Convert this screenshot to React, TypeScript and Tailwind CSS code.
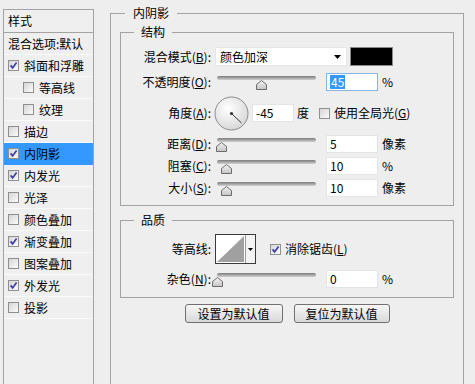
import React from "react";

type Item = { name: string; on?: boolean; sub?: boolean; sel?: boolean };

const items: Item[] = [
  { name: "斜面和浮雕", on: true },
  { name: "等高线", sub: true },
  { name: "纹理", sub: true },
  { name: "描边" },
  { name: "内阴影", on: true, sel: true },
  { name: "内发光", on: true },
  { name: "光泽" },
  { name: "颜色叠加" },
  { name: "渐变叠加", on: true },
  { name: "图案叠加" },
  { name: "外发光", on: true },
  { name: "投影" },
];

const Check = ({ on }: { on?: boolean }) => (
  <span className="w-[11px] h-[11px] shrink-0 border border-[#8e8f8f] bg-gradient-to-br from-[#d6d6d6] to-[#fbfbfb] flex items-center justify-center">
    {on && (
      <svg width="9" height="9" viewBox="0 0 9 9">
        <path d="M1.6 4.4L3.6 6.9L7.6 1.6" stroke="#3b3ba3" strokeWidth="1.7" fill="none" />
      </svg>
    )}
  </span>
);

const Label = ({ text, k }: { text: string; k?: string }) => (
  <div className="w-[90px] shrink-0 text-right whitespace-nowrap">
    {text}
    {k && (
      <>
        (<span className="underline">{k}</span>):
      </>
    )}
  </div>
);

const Slider = ({ value }: { value: number }) => (
  <div className="relative w-[104px] h-[18px] shrink-0">
    <div className="ml-[2px] mt-[5px] w-[99px] h-[4px] rounded-full bg-gradient-to-b from-[#7c7c7c] to-[#d2d2d2]" />
    <svg
      className="absolute top-[4px]"
      style={{ left: 2 + value * 99 - 5.5 }}
      width="11"
      height="10"
      viewBox="0 0 11 10"
    >
      <defs>
        <linearGradient id="tg" x1="0" y1="0" x2="0" y2="1">
          <stop offset="0" stopColor="#f4f4f4" />
          <stop offset="1" stopColor="#c4c4c4" />
        </linearGradient>
      </defs>
      <path d="M5.5 0.5L10.5 4.5V9.5H0.5V4.5Z" fill="url(#tg)" stroke="#6b6b6b" />
    </svg>
  </div>
);

const Field = ({ v, w = "w-[52px]", focus }: { v: string; w?: string; focus?: boolean }) => (
  <div
    className={`h-[18px] ${w} shrink-0 bg-white border ${
      focus ? "border-[#86b5e2]" : "border-[#e4e4e4]"
    } flex items-center pl-[3px]`}
  >
    {focus ? <span className="bg-[#3399ff] text-white px-[1px] leading-[14px]">{v}</span> : v}
  </div>
);

const Box = ({ title, children, className }: { title: string; children: React.ReactNode; className?: string }) => (
  <div className={`border border-[#a3a3a3] ${className ?? ""}`}>
    <div className="-mt-[8px] ml-[13px] px-[7px] w-fit bg-[#eeeeee] leading-[14px]">{title}</div>
    {children}
  </div>
);

export default function App() {
  return (
    <div className="w-[475px] h-[384px] overflow-hidden bg-[#eeeeee] flex text-[12px] leading-[14px] text-black font-['Noto_Sans_CJK_SC','Noto_Sans',sans-serif]">
      {/* style list */}
      <div className="ml-[3px] mt-[9px] w-[91px] self-stretch border border-b-0 border-[#a3a3a3] bg-[#efefef]">
        <div className="h-[23px] border-b border-[#a3a3a3] pl-[4px] flex items-center">样式</div>
        <div className="h-[22px] border-b border-[#fbfbfb] pl-[4px] flex items-center whitespace-nowrap">混合选项:默认</div>
        {items.map((it) => (
          <div
            key={it.name}
            className={`h-[22px] border-b flex items-center gap-[5px] ${it.sub ? "pl-[19px]" : "pl-[4px]"} ${
              it.sel ? "bg-[#3399ff] border-[#3399ff]" : "border-[#fbfbfb]"
            }`}
          >
            <Check on={it.on} />
            <span>{it.name}</span>
          </div>
        ))}
      </div>

      {/* inner shadow panel */}
      <div className="ml-[16px] mt-[13px] w-[354px] self-stretch border border-b-0 border-[#a3a3a3]">
        <div className="-mt-[8px] ml-[14px] px-[8px] w-fit bg-[#eeeeee] leading-[14px]">内阴影</div>

        <Box title="结构" className="mt-[12px] ml-[9px] mr-[9px] pb-[8px]">
          <div className="mt-[8px] h-[19px] flex items-center">
            <Label text="混合模式" k="B" />
            <div className="ml-[4px] w-[132px] h-[19px] bg-white border border-[#e6e6e6] flex items-center justify-between pl-[4px] pr-[5px]">
              <span>颜色加深</span>
              <svg width="7" height="4" viewBox="0 0 7 4">
                <path d="M0 0H7L3.5 4Z" fill="#000" />
              </svg>
            </div>
            <div className="ml-[3px] w-[43px] h-[19px] bg-black border border-[#8a8a8a]" />
          </div>

          <div className="mt-[7px] h-[18px] flex items-center">
            <Label text="不透明度" k="O" />
            <div className="ml-[4px]"><Slider value={0.45} /></div>
            <div className="ml-[7px]"><Field v="45" focus /></div>
            <span className="ml-[4px]">%</span>
          </div>

          <div className="mt-[5px] h-[34px] flex items-center">
            <Label text="角度" k="A" />
            <svg className="ml-[3px] shrink-0" width="35" height="35" viewBox="0 0 35 35">
              <defs>
                <radialGradient id="dg" cx="40%" cy="35%" r="70%">
                  <stop offset="0" stopColor="#ffffff" />
                  <stop offset="1" stopColor="#d6d6d6" />
                </radialGradient>
              </defs>
              <circle cx="17.5" cy="17.5" r="16.5" fill="url(#dg)" stroke="#8c8c8c" />
              <line x1="17.5" y1="17.5" x2="27.5" y2="27" stroke="#333" strokeWidth="1" />
              <circle cx="17.5" cy="17.5" r="1.6" fill="#333" />
            </svg>
            <div className="ml-[3px]"><Field v="-45" w="w-[42px]" /></div>
            <span className="ml-[3px]">度</span>
            <div className="ml-[10px]"><Check /></div>
            <span className="ml-[4px] whitespace-nowrap">
              使用全局光(<span className="underline">G</span>)
            </span>
          </div>

          {[
            { t: "距离", k: "D", v: "5", f: 0.05, u: "像素", m: "mt-[5px]" },
            { t: "阻塞", k: "C", v: "10", f: 0.1, u: "%", m: "mt-[4px]" },
            { t: "大小", k: "S", v: "10", f: 0.1, u: "像素", m: "mt-[4px]" },
          ].map((r) => (
            <div key={r.t} className={`${r.m} h-[18px] flex items-center`}>
              <Label text={r.t} k={r.k} />
              <div className="ml-[4px]"><Slider value={r.f} /></div>
              <div className="ml-[7px]"><Field v={r.v} /></div>
              <span className="ml-[4px]">{r.u}</span>
            </div>
          ))}
        </Box>

        <Box title="品质" className="mt-[14px] ml-[9px] mr-[9px] pb-[9px]">
          <div className="mt-[7px] h-[30px] flex items-center">
            <Label text="等高线:" />
            <div className="ml-[4px] h-[30px] w-[41px] border border-[#3a3a3a] bg-white flex">
              <svg width="29" height="28" viewBox="0 0 29 28">
                <path d="M1 27L28 1V27Z" fill="#a0a0a0" />
              </svg>
              <div className="w-[10px] border-l border-[#9a9a9a] bg-[#f4f4f4] flex items-center justify-center">
                <svg width="5" height="3" viewBox="0 0 5 3">
                  <path d="M0 0H5L2.5 3Z" fill="#000" />
                </svg>
              </div>
            </div>
            <div className="ml-[14px]"><Check on /></div>
            <span className="ml-[4px] whitespace-nowrap">
              消除锯齿(<span className="underline">L</span>)
            </span>
          </div>
          <div className="mt-[6px] h-[18px] flex items-center">
            <Label text="杂色" k="N" />
            <div className="ml-[4px]"><Slider value={0} /></div>
            <div className="ml-[7px]"><Field v="0" /></div>
            <span className="ml-[4px]">%</span>
          </div>
        </Box>

        <div className="mt-[6px] flex justify-center gap-[11px]">
          <button className="w-[98px] h-[19px] border border-[#707070] rounded-[3px] bg-gradient-to-b from-[#f7f7f7] to-[#d9d9d9] flex items-center justify-center">
            设置为默认值
          </button>
          <button className="w-[96px] h-[19px] border border-[#707070] rounded-[3px] bg-gradient-to-b from-[#f7f7f7] to-[#d9d9d9] flex items-center justify-center">
            复位为默认值
          </button>
        </div>
      </div>
    </div>
  );
}
